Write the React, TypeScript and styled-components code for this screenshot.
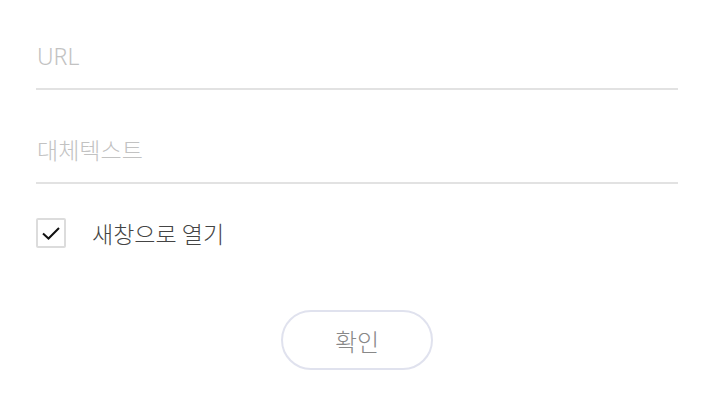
import React, { useState } from 'react';
import styled, { createGlobalStyle } from 'styled-components';

const GlobalStyle = createGlobalStyle`
  html, body {
    margin: 0;
    padding: 0;
    background: #fff;
    font-family: 'Noto Sans', 'Noto Sans CJK KR', sans-serif;
  }
`;

const Form = styled.form`
  display: flex;
  flex-direction: column;
  padding: 0 26px 0 36px;
  width: 704px;
  box-sizing: border-box;
`;

const Field = styled.input<{ $top: number }>`
  display: block;
  width: 100%;
  box-sizing: border-box;
  height: 62px;
  margin-top: ${(p) => p.$top}px;
  padding: 0 0 4px 1px;
  border: none;
  border-bottom: 2px solid #e2e2e2;
  outline: none;
  font-family: 'Noto Sans', 'Noto Sans CJK KR', sans-serif;
  font-size: 23px;
  font-weight: 300;
  color: #333;
  background: transparent;
  &::placeholder {
    color: #c2c2c2;
  }
`;

const CheckRow = styled.label`
  display: flex;
  align-items: center;
  gap: 26px;
  margin-top: 34px;
  cursor: pointer;
`;

const Box = styled.span`
  width: 30px;
  height: 30px;
  box-sizing: border-box;
  border: 2px solid #dcdcdc;
  border-radius: 2px;
  display: flex;
  align-items: center;
  justify-content: center;
  background: #fff;
`;

const HiddenCheck = styled.input`
  display: none;
`;

const LabelText = styled.span`
  font-family: 'Noto Sans CJK KR', sans-serif;
  font-size: 23px;
  font-weight: 300;
  color: #444;
  line-height: 30px;
`;

const ButtonRow = styled.div`
  display: flex;
  justify-content: center;
  margin-top: 62px;
`;

const Confirm = styled.button`
  width: 152px;
  height: 60px;
  box-sizing: border-box;
  border: 2px solid #e0e2ee;
  border-radius: 30px;
  background: #fff;
  font-family: 'Noto Sans CJK KR', sans-serif;
  font-size: 24px;
  font-weight: 300;
  color: #888;
  cursor: pointer;
`;

export default function App() {
  const [checked, setChecked] = useState(true);
  return (
    <>
      <GlobalStyle />
      <Form onSubmit={(e) => e.preventDefault()}>
        <Field $top={28} placeholder="URL" />
        <Field $top={32} placeholder="대체텍스트" />
        <CheckRow>
          <HiddenCheck
            type="checkbox"
            checked={checked}
            onChange={() => setChecked(!checked)}
          />
          <Box>
            {checked && (
              <svg width="20" height="16" viewBox="0 0 20 16">
                <path d="M2 8.5 L7.5 13.5 L18 3" fill="none" stroke="#111" strokeWidth="2" />
              </svg>
            )}
          </Box>
          <LabelText>새창으로 열기</LabelText>
        </CheckRow>
        <ButtonRow>
          <Confirm type="submit">확인</Confirm>
        </ButtonRow>
      </Form>
    </>
  );
}
